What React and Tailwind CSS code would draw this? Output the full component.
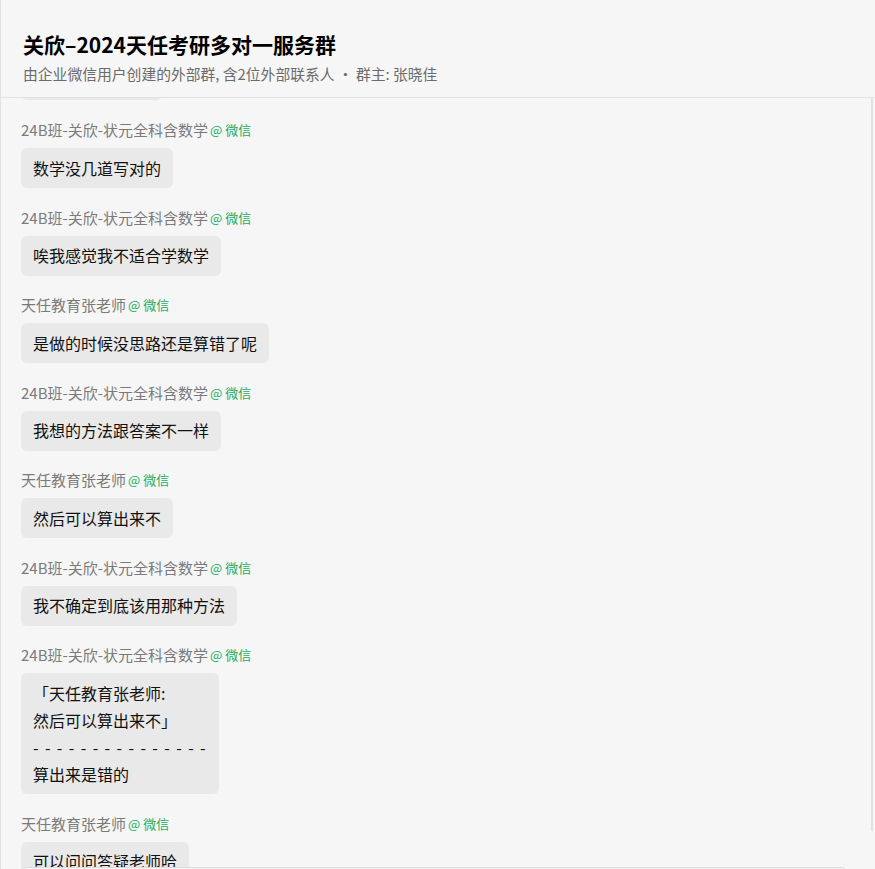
import React from 'react'

const messages = [
  { sender: '24B班-关欣-状元全科含数学', lines: ['数学没几道写对的'] },
  { sender: '24B班-关欣-状元全科含数学', lines: ['唉我感觉我不适合学数学'] },
  { sender: '天任教育张老师', lines: ['是做的时候没思路还是算错了呢'] },
  { sender: '24B班-关欣-状元全科含数学', lines: ['我想的方法跟答案不一样'] },
  { sender: '天任教育张老师', lines: ['然后可以算出来不'] },
  { sender: '24B班-关欣-状元全科含数学', lines: ['我不确定到底该用那种方法'] },
  {
    sender: '24B班-关欣-状元全科含数学',
    lines: ['「天任教育张老师:', '然后可以算出来不」', '- - - - - - - - - - - - - - -', '算出来是错的'],
  },
  { sender: '天任教育张老师', lines: ['可以问问答疑老师哈'] },
]

function Message({ sender, lines }) {
  return (
    <div className="mb-[19.5px]">
      <div className="flex items-center text-[15px] leading-[20px] text-[#7a7a7a]">
        <span>{sender}</span>
        <span className="ml-[2px] text-[13px] text-[#1aad5f]">@</span>
        <span className="ml-[3px] text-[13px] text-[#1aad5f]">微信</span>
      </div>
      <div className="mt-[8px] inline-block rounded-[6px] bg-[#e9e9e9] px-[12px] py-[6.5px] text-[16px] leading-[27px] text-[#111]">
        {lines.map((l, i) => (
          <div key={i} className={l.startsWith('-') ? 'whitespace-pre tracking-[1.4px]' : 'whitespace-pre'}>
            {l}
          </div>
        ))}
      </div>
    </div>
  )
}

export default function App() {
  return (
    <div
      className="relative flex h-[869px] w-[875px] flex-col overflow-hidden border-l border-[#e2e2e2] bg-[#f6f6f6]"
      style={{ fontFamily: '"Noto Sans CJK SC", "Noto Sans", sans-serif' }}
    >
      <div className="relative z-10 h-[98px] shrink-0 border-b border-[#e3e3e3] bg-[#f6f6f6] px-[22px] pt-[29px]">
        <h1 className="text-[21px] font-bold leading-[30px] text-black">关欣–2024天任考研多对一服务群</h1>
        <p className="mt-[5px] text-[14.8px] leading-[20px] text-[#6b6b6b]">
          由企业微信用户创建的外部群, 含2位外部联系人 · 群主: 张晓佳
        </p>
      </div>
      <div className="flex-1 overflow-hidden">
        <div className="h-full w-[872px] border-r-2 border-[#e1e1e1] pl-[20px]">
          <div className="-mt-[38px]">
            <div className="mb-[20px] h-[40px] w-[141px] rounded-[6px] bg-[#e9e9e9]" />
            {messages.map((m, i) => (
              <Message key={i} {...m} />
            ))}
          </div>
        </div>
      </div>
      <div className="absolute left-[21px] right-[28px] top-[867px] h-[20px] rounded-t-[6px] border-t border-[#dcdcdc] bg-[#f6f6f6]" />
    </div>
  )
}
